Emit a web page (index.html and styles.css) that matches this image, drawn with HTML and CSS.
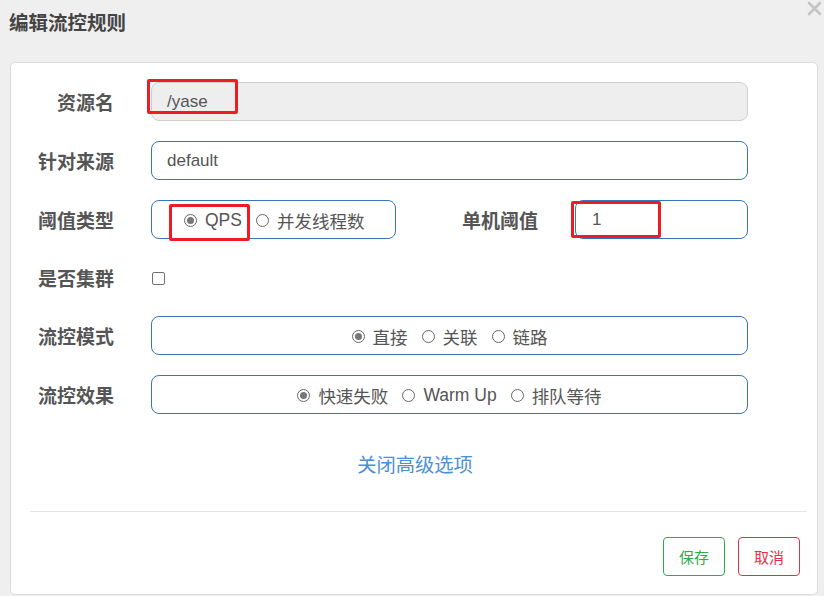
FILE: index.html
```html
<!DOCTYPE html>
<html lang="zh-CN">
<head>
    <meta charset="UTF-8">
    <title>编辑流控规则</title>
    <link rel="stylesheet" href="styles.css">
</head>
<body>
    <div class="modal-header">
        <div class="modal-title">编辑流控规则</div>
        <span class="close">
            <svg width="15" height="15" viewBox="0 0 15 15"><path d="M2 2 L13 13 M13 2 L2 13" stroke="#c4c4c4" stroke-width="2.6" stroke-linecap="round"/></svg>
        </span>
    </div>

    <div class="modal-body">
        <div class="form-row">
            <label class="form-label">资源名</label>
            <div class="field">
                <div class="input disabled">/yase</div>
                <span class="mark mark-resource"></span>
            </div>
        </div>

        <div class="form-row">
            <label class="form-label">针对来源</label>
            <div class="field">
                <div class="input">default</div>
            </div>
        </div>

        <div class="form-row">
            <label class="form-label">阈值类型</label>
            <div class="field threshold">
                <div class="input radio-box left">
                    <span class="radio checked"></span><span class="radio-text">QPS</span>
                    <span class="radio"></span><span class="radio-text">并发线程数</span>
                    <span class="mark mark-qps"></span>
                </div>
                <label class="form-label inline-label">单机阈值</label>
                <div class="count-wrap">
                    <div class="input count">1</div>
                    <span class="mark mark-count"></span>
                </div>
            </div>
        </div>

        <div class="form-row short">
            <label class="form-label">是否集群</label>
            <div class="field">
                <span class="checkbox"></span>
            </div>
        </div>

        <div class="form-row">
            <label class="form-label">流控模式</label>
            <div class="field">
                <div class="input radio-box">
                    <span class="radio checked"></span><span class="radio-text">直接</span>
                    <span class="radio"></span><span class="radio-text">关联</span>
                    <span class="radio"></span><span class="radio-text">链路</span>
                </div>
            </div>
        </div>

        <div class="form-row">
            <label class="form-label">流控效果</label>
            <div class="field">
                <div class="input radio-box">
                    <span class="radio checked"></span><span class="radio-text">快速失败</span>
                    <span class="radio"></span><span class="radio-text">Warm Up</span>
                    <span class="radio"></span><span class="radio-text">排队等待</span>
                </div>
            </div>
        </div>

        <div class="advanced">
            <a class="advanced-link">关闭高级选项</a>
        </div>

        <div class="modal-footer">
            <button class="btn btn-save">保存</button>
            <button class="btn btn-cancel">取消</button>
        </div>
    </div>
</body>
</html>
```

FILE: styles.css
```css
* {
    margin: 0;
    padding: 0;
    box-sizing: border-box;
}

body {
    font-family: "Noto Sans CJK SC", "Liberation Sans", sans-serif;
    background: #efefef;
    width: 824px;
    height: 596px;
    overflow: hidden;
}

.modal-header {
    height: 62px;
    display: flex;
    justify-content: space-between;
    align-items: flex-start;
    padding-left: 9px;
}

.modal-title {
    font-size: 19.5px;
    font-weight: bold;
    color: #444;
    line-height: 44px;
}

.close {
    margin-top: 1px;
    margin-right: 2px;
    display: flex;
}

.modal-body {
    margin: 0 6px 0 10px;
    height: 533px;
    background: #fff;
    border: 1px solid #dcdcdc;
    border-radius: 5px;
    padding: 19px 10px 0 18px;
}

.form-row {
    display: flex;
    align-items: center;
    height: 39px;
    margin-bottom: 20px;
}

.form-row.short {
    height: 37px;
}

.form-label {
    width: 85px;
    text-align: right;
    font-size: 19px;
    font-weight: bold;
    color: #555;
    flex-shrink: 0;
}

.field {
    margin-left: 37px;
    width: 597px;
    position: relative;
    display: flex;
    align-items: center;
}

.input {
    width: 100%;
    height: 39px;
    border: 1px solid #3777b8;
    border-radius: 8px;
    padding-left: 15px;
    font-size: 17px;
    color: #555;
    display: flex;
    align-items: center;
    font-family: "Liberation Sans", "Noto Sans CJK SC", sans-serif;
}

.input.disabled {
    background: #eeeeee;
    border-color: #cfcfcf;
}

.threshold .radio-box.left {
    width: 245px;
    flex-shrink: 0;
    justify-content: flex-start;
    padding-left: 32px;
    position: relative;
}

.inline-label {
    width: 142px;
    flex-shrink: 0;
}

.count-wrap {
    margin-left: 37px;
    width: 173px;
    position: relative;
}

.input.count {
    padding-left: 16px;
}

.radio-box {
    justify-content: center;
    padding-left: 0;
    padding-top: 2px;
    font-size: 17.5px;
}

.radio {
    width: 13px;
    height: 13px;
    border: 1px solid #666;
    border-radius: 50%;
    display: inline-flex;
    align-items: center;
    justify-content: center;
    flex-shrink: 0;
    margin-right: 8px;
}

.radio.checked::after {
    content: "";
    width: 7px;
    height: 7px;
    border-radius: 50%;
    background: #777;
}

.radio-text {
    margin-right: 14px;
    font-family: "Liberation Sans", "Noto Sans CJK SC", sans-serif;
}

.radio-text:last-child {
    margin-right: 0;
}

.radio-box.left .radio-text {
    margin-right: 14px;
}

.checkbox {
    width: 13px;
    height: 13px;
    border: 1.5px solid #6f6f6f;
    border-radius: 2px;
    margin-left: 1px;
    margin-top: 2px;
}

/* 截图上的红色标注框 */
.mark {
    position: absolute;
    border: 3px solid #ee1c25;
    border-radius: 2px;
    pointer-events: none;
}

.mark-resource {
    left: -4px;
    top: -3px;
    width: 91px;
    height: 35px;
}

.mark-qps {
    left: 17px;
    top: 3px;
    width: 81px;
    height: 37px;
}

.mark-count {
    left: -4px;
    top: 1px;
    width: 90px;
    height: 37px;
}

.advanced {
    text-align: center;
    margin-top: 36px;
    height: 42px;
    padding-right: 6px;
}

.advanced-link {
    font-size: 19.3px;
    color: #4a8fd4;
    cursor: pointer;
}

.modal-footer {
    margin-top: 19px;
    border-top: 1px solid #e5e5e5;
    margin-left: 1px;
    padding-top: 25px;
    display: flex;
    justify-content: flex-end;
    gap: 13px;
    padding-right: 7px;
}

.btn {
    width: 62px;
    height: 39px;
    background: #fff;
    border-radius: 4px;
    font-size: 15px;
    font-family: "Noto Sans CJK SC", sans-serif;
    cursor: pointer;
}

.btn-save {
    border: 1px solid #2eaa4a;
    color: #2eaa4a;
}

.btn-cancel {
    border: 1px solid #de3347;
    color: #de3347;
}
```
